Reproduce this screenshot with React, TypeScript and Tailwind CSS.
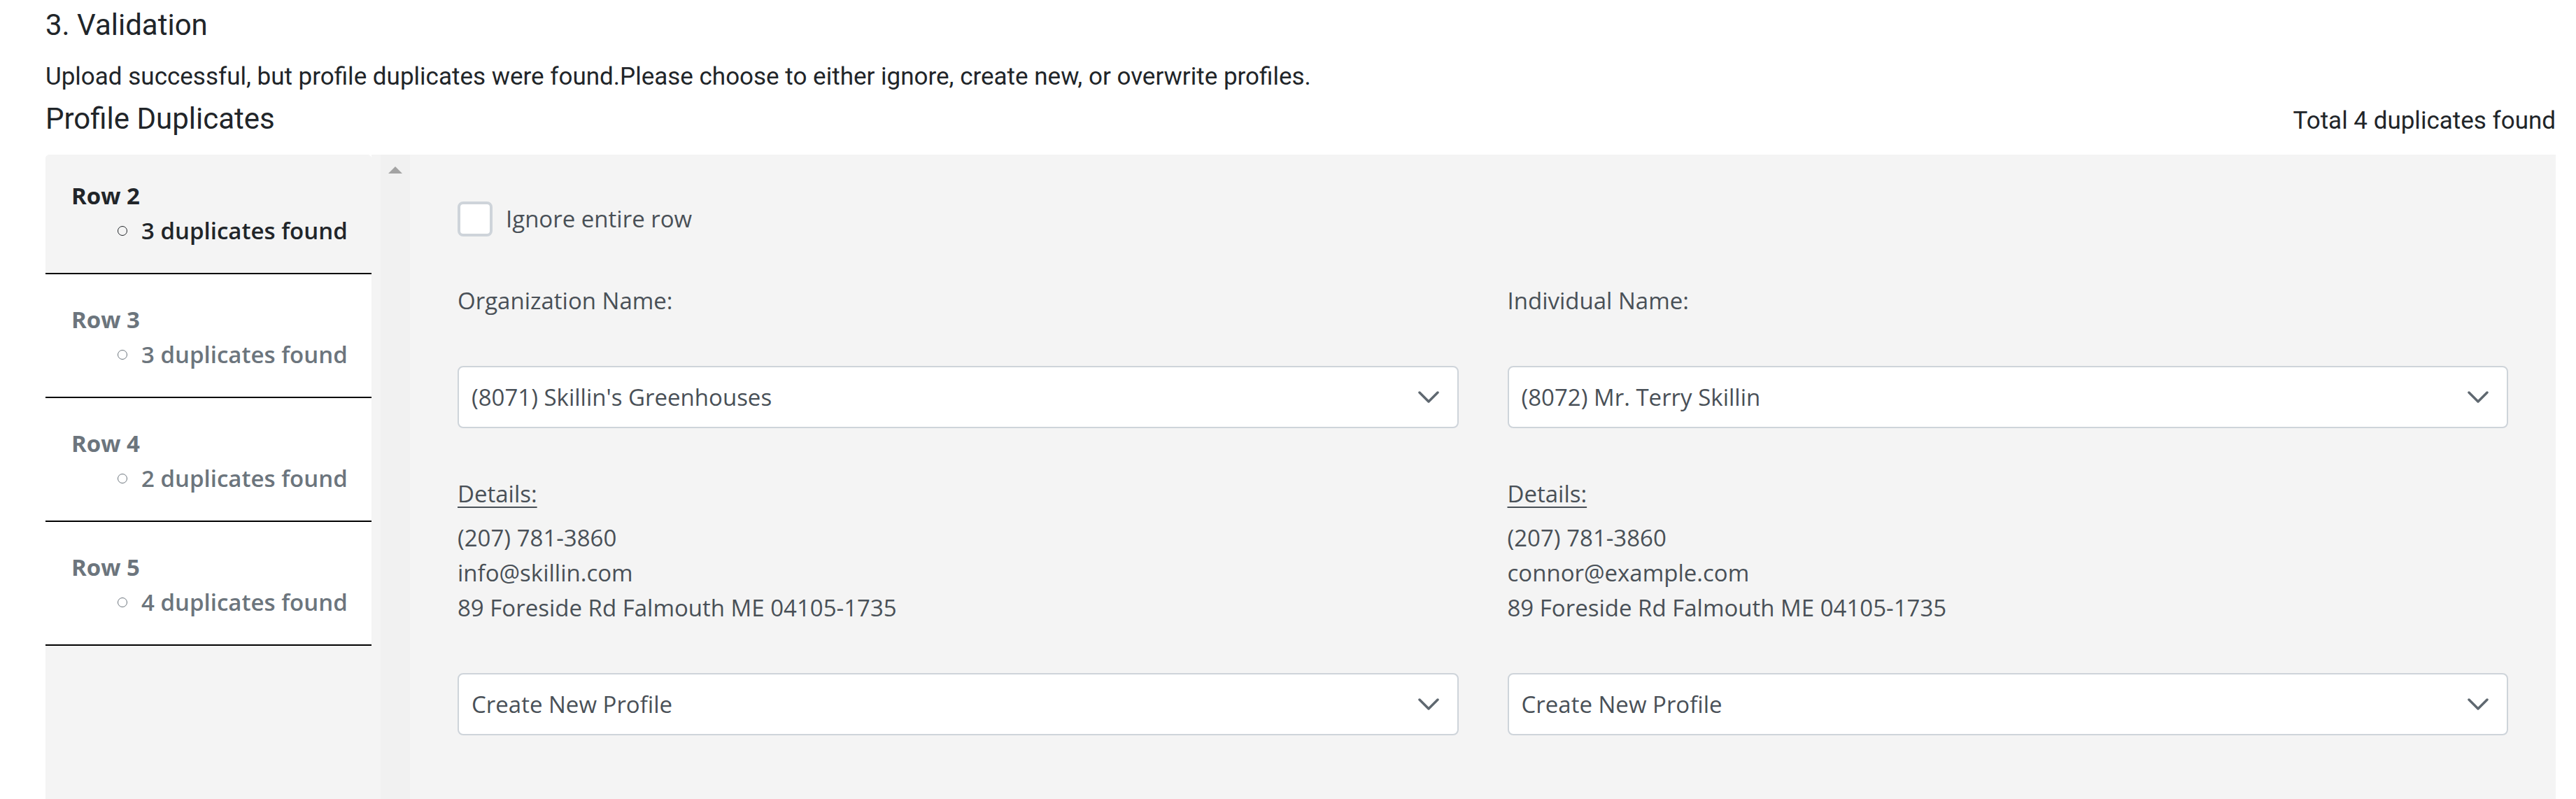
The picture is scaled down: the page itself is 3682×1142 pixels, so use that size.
import React from "react";

const rows = [
  { label: "Row 2", count: 3, active: true },
  { label: "Row 3", count: 3, active: false },
  { label: "Row 4", count: 2, active: false },
  { label: "Row 5", count: 4, active: false },
];

function Chevron() {
  return (
    <svg width="30" height="17" viewBox="0 0 30 17" fill="none">
      <polyline
        points="2,2 15,15 28,2"
        stroke="#5f6870"
        strokeWidth="3.5"
        strokeLinecap="round"
        strokeLinejoin="round"
      />
    </svg>
  );
}

function FakeSelect({ value }: { value: string }) {
  return (
    <div className="flex h-[89px] items-center justify-between rounded-[8px] border-2 border-[#ced4da] bg-white pl-[18px] pr-[26px]">
      <span className="leading-[50px]">{value}</span>
      <Chevron />
    </div>
  );
}

function ProfileColumn({
  title,
  selected,
  email,
}: {
  title: string;
  selected: string;
  email: string;
}) {
  return (
    <div className="flex flex-col">
      <p className="leading-[50px]">{title}</p>
      <div className="mt-[68px]">
        <FakeSelect value={selected} />
      </div>
      <p className="mt-[69px] leading-[50px] underline underline-offset-[6px] decoration-2">Details:</p>
      <div className="mt-[13px] leading-[50px]">
        <p>(207) 781-3860</p>
        <p>{email}</p>
        <p>89 Foreside Rd Falmouth ME 04105-1735</p>
      </div>
      <div className="mt-[68px]">
        <FakeSelect value="Create New Profile" />
      </div>
    </div>
  );
}

export default function App() {
  return (
    <div className="min-h-screen overflow-hidden bg-white pl-[65px] pr-[29px] pt-[11px] text-[#212529]">
      <h1 className="font-['Roboto',sans-serif] text-[42px] font-normal leading-[50px]">3. Validation</h1>
      <p className="mt-[23px] font-['Roboto',sans-serif] text-[35px] leading-[52px]">
        Upload successful, but profile duplicates were found.Please choose to either ignore, create new, or overwrite profiles.
      </p>
      <div className="mt-[9px] flex items-baseline justify-between font-['Roboto',sans-serif]">
        <h2 className="text-[42px] font-normal leading-[50px]">Profile Duplicates</h2>
        <span className="text-[35px] leading-[50px]">Total 4 duplicates found</span>
      </div>

      <div className="mt-[23px] flex h-[924px] font-['Open_Sans',sans-serif] text-[33px]">
        {/* row list */}
        <div className="flex w-[466px] flex-col overflow-hidden rounded-t-[6px] bg-[#f4f4f4]">
          {rows.map((r, i) => (
            <div
              key={r.label}
              className={`border-b-2 border-black pb-[35px] pl-[37px] ${i === 0 ? "pt-[34px]" : "pt-[40px]"} ${
                r.active ? "bg-[#f4f4f4] text-[#212529]" : "bg-white text-[#6c757d]"
              }`}
            >
              <p className="font-bold leading-[50px]">{r.label}</p>
              <div className="flex items-center pl-[66px] font-semibold leading-[50px]">
                <span className="mr-[20px] h-[14px] w-[14px] rounded-full border-[1.5px] border-current" />
                <span>{r.count} duplicates found</span>
              </div>
            </div>
          ))}
        </div>

        {/* scrollbar */}
        <div className="flex w-[55px] justify-end bg-[#f4f4f4]">
          <div className="flex w-[42px] justify-center bg-[#f1f1f1] pt-[17px]">
            <div className="h-0 w-0 border-x-[10px] border-b-[10px] border-x-transparent border-b-[#a3a3a3]" />
          </div>
        </div>

        {/* detail panel */}
        <div className="flex-1 bg-[#f4f4f4] px-[68px] pt-[67px] text-[#495057]">
          <label className="flex items-center gap-[19px]">
            <span className="h-[50px] w-[50px] rounded-[8px] border-4 border-[#ced4da] bg-white" />
            <span className="leading-[50px]">Ignore entire row</span>
          </label>

          <div className="mt-[67px] grid grid-cols-2 gap-x-[70px]">
            <ProfileColumn
              title="Organization Name:"
              selected="(8071) Skillin's Greenhouses"
              email="info@skillin.com"
            />
            <ProfileColumn
              title="Individual Name:"
              selected="(8072) Mr. Terry Skillin"
              email="connor@example.com"
            />
          </div>
        </div>
      </div>
    </div>
  );
}
